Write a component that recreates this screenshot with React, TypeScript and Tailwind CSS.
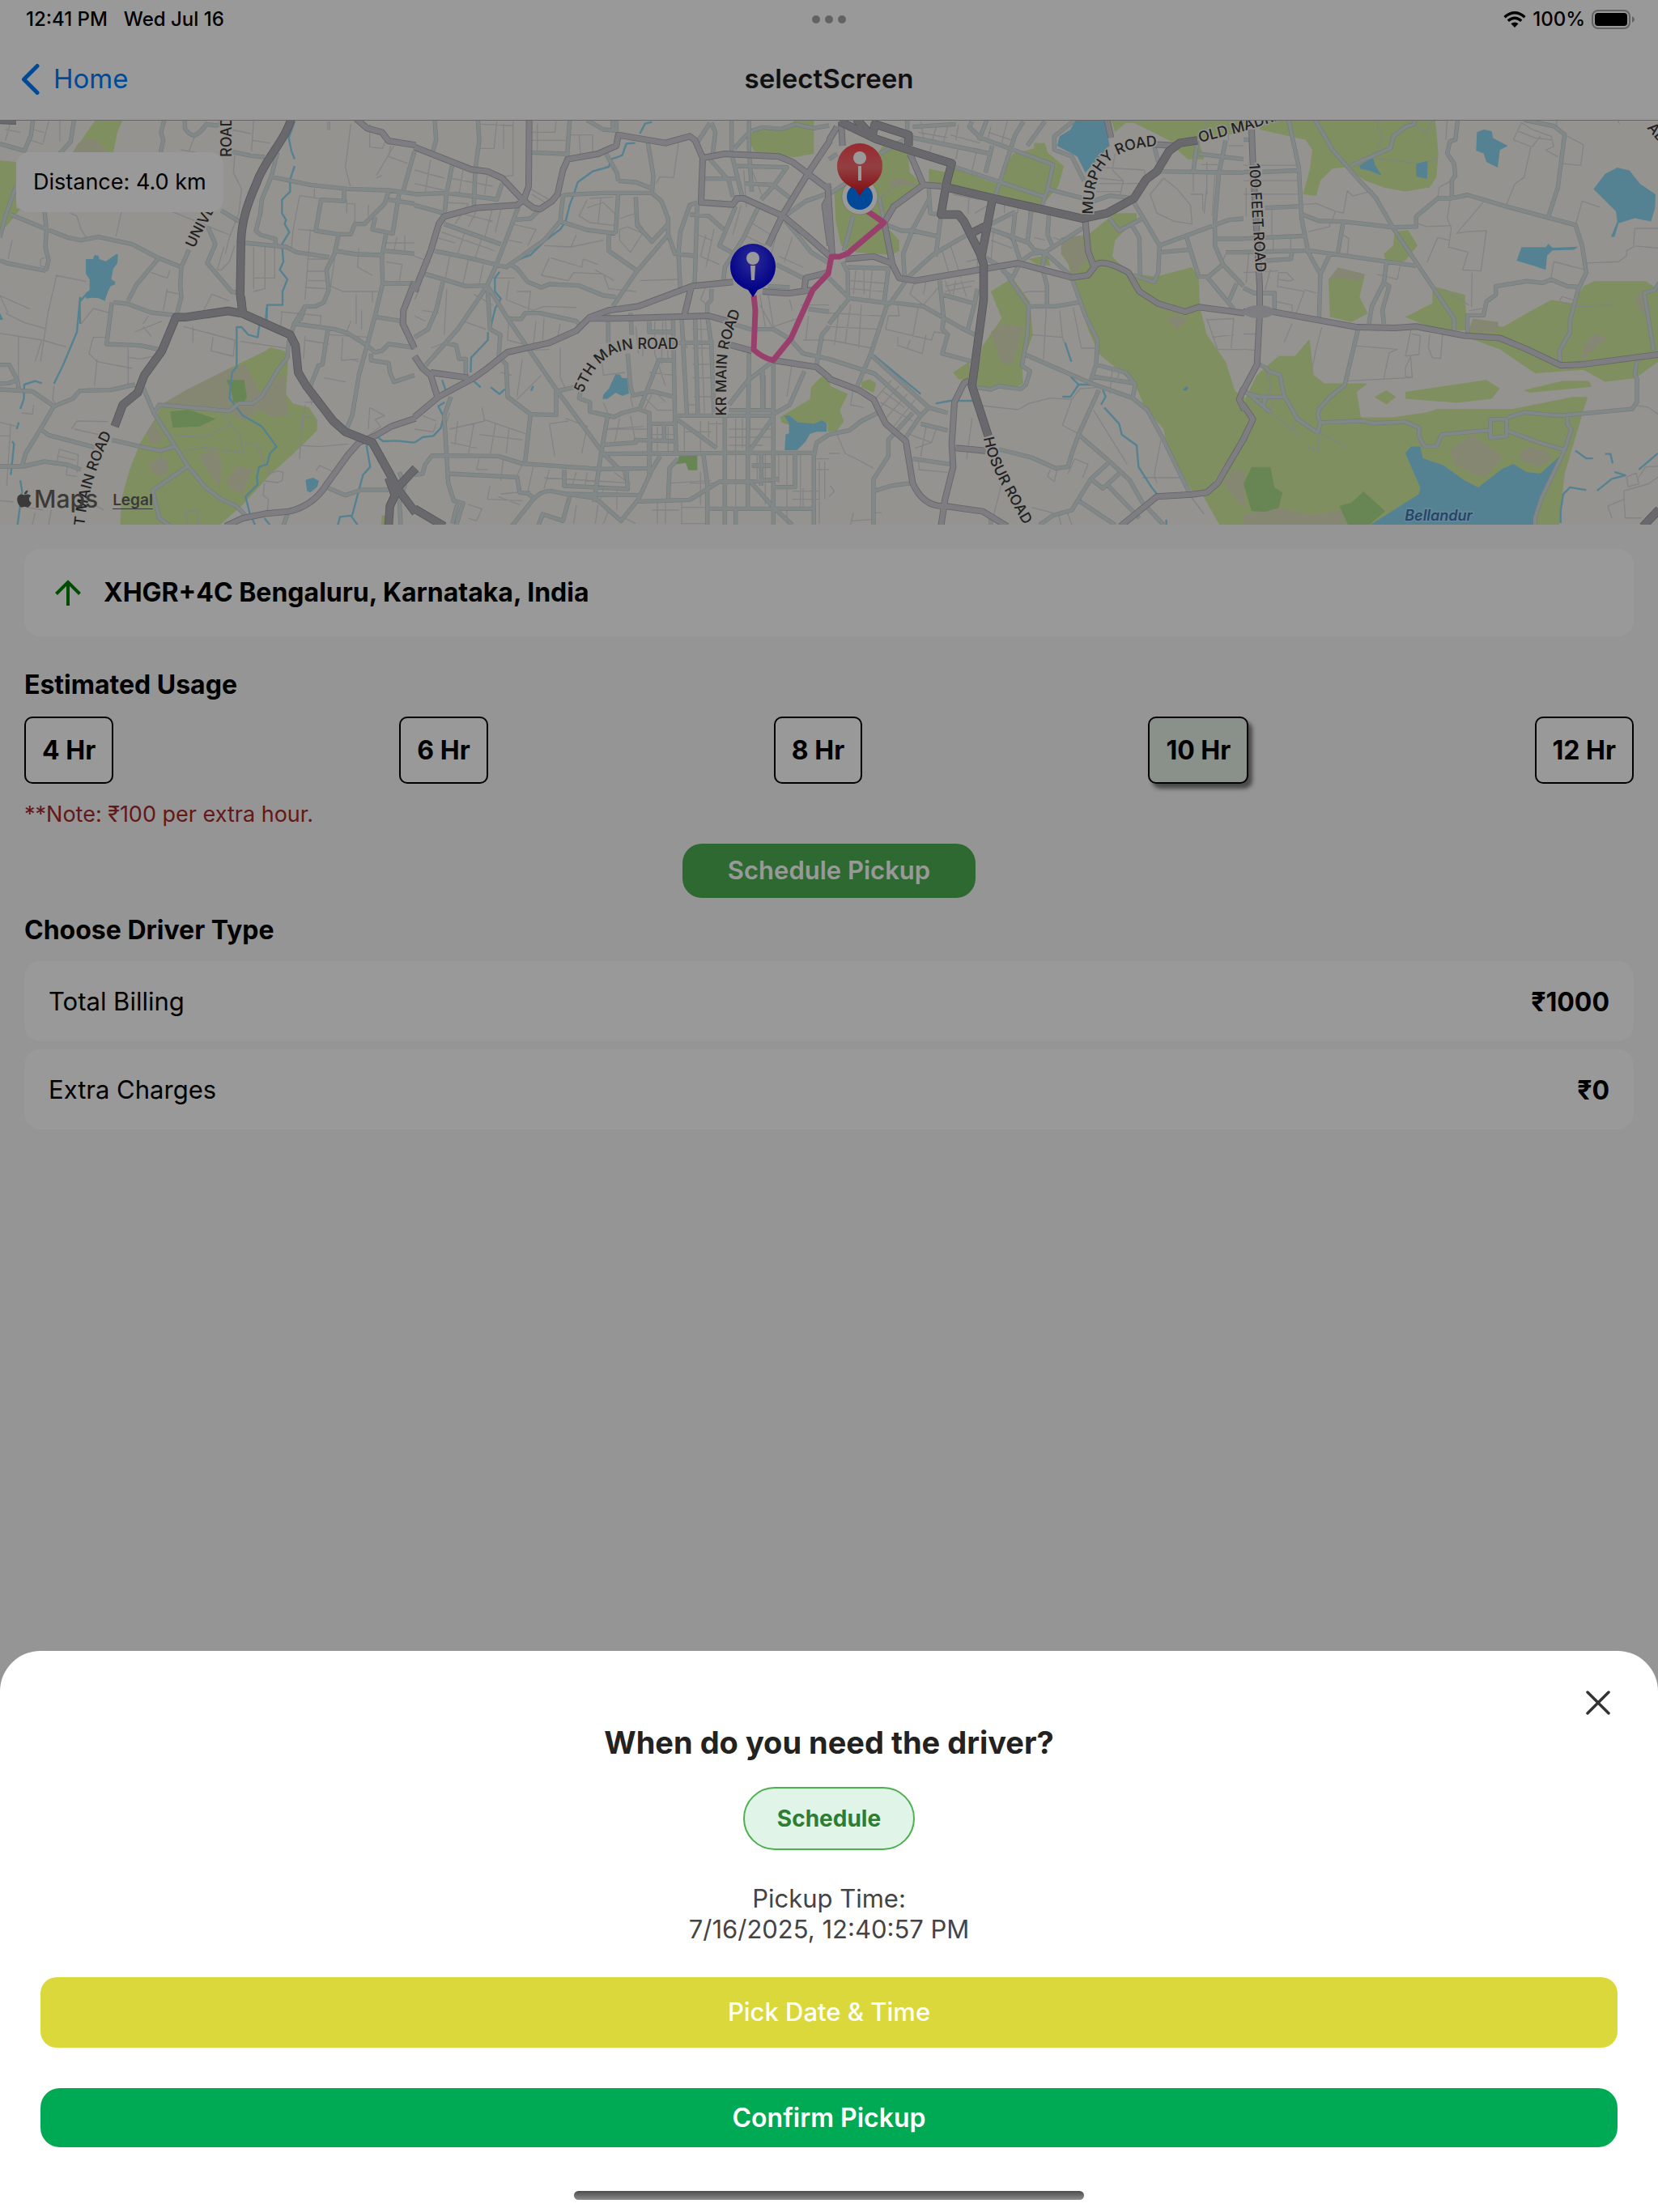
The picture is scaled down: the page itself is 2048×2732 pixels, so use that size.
import React, { useState } from "react";
import { FaApple } from "react-icons/fa";

type Tile = {
  transform: string;
  green: string;
  pale?: string;
  forest?: string;
  lake?: string;
  stream?: string;
  tiny: string;
  minor: string;
  medium: string;
  dark?: string;
};

/* The city map is described as five sheets, each in its own survey grid. */
const tiles: Tile[] = [
  {
    transform: "scale(0.33333)",
    green:
      "M355,444 H455 L435,490 L420,565 H270 L315,500Z M0,595 L60,600 V770 L75,775 L30,830 L0,860Z",
    pale: "M270,565 L290,530 L320,512 L360,520 L400,565Z",
    lake:
      "M318,960 L345,960 L350,945 L365,947 L368,960 L392,968 L430,942 H437 L435,975 L420,995 L412,1035 L428,1045 L425,1055 L410,1060 L400,1080 L388,1115 L365,1105 L340,1103 L318,1106 L318,1085 L332,1075 L332,1035 L318,1015Z M0,1160 L12,1185 H0Z",
    stream:
      "M1092,450 L1070,510 L1080,560 L1092,590 M1092,615 L1075,665 L1075,710 L1045,740 L1045,790 L1060,815 L1055,830 L1072,860 L1045,905 L1050,970 L1037,1000 L1065,1035 L1047,1080 V1130 H990 L988,1190 M320,1090 L295,1118 L297,1200",
    tiny:
      "M180,450 L160,530 M125,480 L165,492 M115,520 L160,535 M222,440 V525 M40,450 L20,520 M20,480 L75,490 M940,445 L932,560 M855,480 L930,495 M935,520 L1000,530 M1215,450 V480 H1222 V450 M1300,460 L1280,620 L1298,690 M1370,460 V545 L1418,550 L1430,520 M1448,540 L1440,580 L1510,605 M1415,650 L1395,660 M1460,540 L1395,650 M260,790 L285,800 L300,850 L320,880 M450,785 L430,875 M640,785 L800,850 L850,870 M870,575 L865,640 L895,700 L885,790 L850,880 L835,940 M670,555 L730,565 M720,510 L700,560 M1165,700 V730 M1180,735 L1110,725 L1085,860 L1080,920 M830,915 L805,1000 L820,1000 L850,970 L870,910 M940,915 V1070 M982,910 V1070 L940,1080 M1018,910 V1030 H940 M1150,850 L1130,1110 M1105,850 L1170,855 M1140,960 H1215 M1140,1005 H1210 M1140,1040 H1210 M1130,1065 L1215,1070 M1285,740 V790 M1285,755 H1315 V830 M1365,760 V800 M1330,920 L1325,990 L1380,1020 M1240,960 L1225,1060 L1270,1080 H1400 M1430,970 L1490,980 L1480,1040 M1470,880 L1460,930 M1500,870 V930 M1430,900 H1536 M1380,1080 V1120 M45,890 L30,960 M150,960 L165,955 M150,960 V985 L170,990 M210,1020 L180,1150 M205,1020 L320,1043 M0,1095 L110,1145",
    minor:
      "M0,533 L95,560 M123,440 L115,500 L90,560 M275,440 L262,525 L220,570 M610,440 L597,490 L605,520 L595,565 M685,440 V475 Q700,500 720,502 Q745,490 765,460 L800,465 L820,460 M0,880 L20,800 L60,690 M40,795 L170,848 L250,880 L300,890 L365,878 L490,905 L585,955 L672,990 M165,785 L172,850 L168,915 L180,965 L170,1003 M0,965 L25,975 L170,1003 M585,960 L505,1055 L475,1115 M700,925 L672,990 L668,1060 L672,1100 L655,1165 M770,840 L798,905 L768,975 L860,1082 L890,1085 M820,780 L885,820 M860,562 L930,577 L980,582 M1028,565 L1005,655 L970,740 L965,790 L948,855 L965,870 L1020,885 L1022,910 M1005,655 L1150,685 L1290,700 L1440,705 L1536,718 M1536,560 L1495,705 M1440,740 L1536,755 M910,900 L1060,915 L1100,935 L1220,953 M1245,930 L1320,942 L1415,945 M1430,930 L1536,940 M1440,710 L1425,755 L1380,800 L1350,830 L1315,830 L1300,868 L1255,868 L1240,940 L1210,1000 L1218,1075 L1200,1120 L1170,1135 L1130,1135 L1115,1180 L1090,1200 M1275,700 L1275,745 L1190,740 L1170,855 L1255,868 M1480,710 L1455,865 L1380,850 L1390,805 M1430,870 L1415,950 L1418,1050 L1390,1170 M1418,1050 L1536,1050",
    medium: "M1320,440 L1360,475 L1415,490 L1440,522 L1540,538",
    dark: "M1082,430 C1060,520 980,590 950,680 C915,760 895,820 893,900 L890,1090 L900,1165 M0,444 L60,446",
  },
  {
    transform: "translate(0 300) scale(0.33333)",
    green:
      "M445,1050 L450,950 L480,840 L520,740 L575,650 L600,600 L690,545 L850,465 L985,400 L1000,387 L1055,400 L1068,430 L1060,560 L1085,595 L1145,610 L1175,655 V695 L1110,760 L1000,860 L900,970 L810,1050Z M1415,1010 H1440 V1050 H1412Z",
    pale:
      "M595,600 L690,545 L850,465 L910,450 L940,510 L970,560 L1055,480 L1060,560 L1070,640 L1010,645 L960,620 L910,660 L830,625 L620,612Z M545,700 L570,660 L600,720 L590,745 L555,740Z M550,820 L590,795 L625,805 L615,860 L580,865Z M735,790 L790,760 L820,800 L815,910 L780,860Z M840,880 L880,825 L935,840 L900,930 L850,910Z",
    forest:
      "M838,508 L905,508 L915,570 L905,590 L865,590 L855,540Z M630,625 L700,618 L800,652 L740,680 L640,685Z",
    lake: "M1132,878 L1160,870 L1182,882 L1175,905 L1150,925 L1138,920Z",
    stream:
      "M297,200 L285,330 L235,450 L200,522 M155,520 L130,512 L90,525 L88,580 L75,615 M70,665 L62,690 M45,735 L52,745 L40,860 M75,880 L82,920 L65,1045 M988,240 L985,285 L960,310 L955,350 L920,340 L895,312 L877,312 V460 L860,480 L850,575 L900,640 L970,680 L1025,755 L1000,780 L990,820 L960,830 L952,870 L955,895 L910,940 L925,1000 L945,1045 M980,1020 L1000,1045 M1400,720 L1420,735 L1470,733 L1536,740 M1358,750 L1372,830 L1345,860 L1305,1010 L1260,1015 L1252,1045 M1300,1010 L1325,1045",
    tiny:
      "M180,245 L150,440 M20,260 L90,295 L170,318 M0,195 L30,260 M0,335 L155,360 L245,385 M68,345 V510 M155,360 L130,440 M345,245 L300,300 M345,243 L408,260 M390,350 H345 L330,410 L360,440 L490,465 M360,430 L350,530 M475,390 V530 M475,425 L520,430 L570,420 M560,110 L620,130 L630,100 M500,330 L600,290 M530,310 L560,345 M530,300 L550,270 M620,170 L605,250 M620,180 L665,190 M680,310 L870,360 M715,310 V370 M785,190 L850,215 M785,190 L755,250 M790,350 L782,400 L865,420 L870,360 M1040,255 L1190,270 L1185,320 M1045,255 L1040,310 M890,365 L1060,390 M1270,350 L1265,435 L1330,430 M1130,360 L1220,375 M1130,345 L1125,430 M285,660 L400,662 M275,690 L410,720 M285,660 L265,690 M220,765 L210,815 L270,830 M220,765 L290,785 L285,850 M215,790 L280,805 M250,830 L245,860 L285,865 M40,670 L25,900 M0,665 L60,680 M0,715 H40 M80,630 L120,635 L125,600 M200,530 L195,580 L210,600 M600,710 L760,720 L850,672 L885,700 L905,780 L760,757 L680,770 M830,630 L860,680 M905,740 L950,745 L975,800 L1000,855 L1030,845 L1050,850 L1045,880 L1030,888 L980,882 M600,770 L590,870 M600,820 L640,870 M1110,800 L1120,640 L1165,650 M1130,600 L1120,690 M1130,590 H1165 M1110,750 L1180,755 L1290,745 M1370,610 L1425,640 L1390,655 L1410,680 L1365,715 M1370,610 L1365,690 M1170,845 L1185,825 L1240,850 M680,1000 L730,990 L735,1040 M685,1000 L695,1045 M980,890 L975,935 L995,950 L990,1000 M0,955 L50,960 M100,980 L160,990 M130,1000 L120,1045 M190,990 L180,1045 M350,970 L385,990 M1220,340 L1370,350 M1300,290 L1280,340 M1320,190 V300 M1340,250 V320 M1300,430 L1330,440 M1200,500 L1280,515 M1150,560 L1155,600",
    minor:
      "M420,220 L470,225 L560,258 L655,268 M415,220 L395,375 L520,380 L590,395 M0,452 L35,452 L65,510 L70,545 M0,522 L30,520 L60,510 M0,543 L120,550 L200,605 L270,577 L295,548 L410,545 L500,525 M200,605 L150,690 L95,780 L82,828 M0,828 L85,828 L165,810 L250,822 L300,840 M150,690 L180,712 L350,757 M415,730 L530,757 L595,770 L645,755 M530,535 L570,630 L695,825 L760,905 L820,950 L875,975 L910,1010 M575,625 L590,600 L850,623 L885,595 L935,595 L970,570 L1030,470 L1065,425 L1070,370 L1090,300 L1130,237 M695,828 L565,918 L590,1020 L630,1048 M1095,300 L1240,320 L1290,335 L1360,380 L1390,405 L1415,400 L1440,375 L1536,388 M1215,320 L1195,450 L1180,455 L1150,530 M1390,270 L1360,380 L1330,490 L1305,640 L1280,700 M1375,410 L1375,435 L1440,445 L1445,480 L1460,515 L1536,490 M1395,275 L1490,290 M1210,905 L1280,935 L1340,915 L1440,915 M1480,850 L1500,900 L1480,950 L1485,1045 M1065,1005 L1050,1048",
    medium:
      "M1540,650 L1450,680 L1390,715 L1330,740 L1290,785 L1210,895 Q1160,975 1070,995 L985,1003 L900,1020 L835,1050 M1536,145 L1495,250 L1493,300 L1536,390",
    dark:
      "M893,200 L900,265 M900,262 L845,252 L690,275 L652,275 L600,400 L535,490 L510,555 L455,600 L425,680 M900,262 L1075,340 L1095,380 L1105,480 L1135,530 L1235,660 L1280,700 L1380,740 L1430,830 L1480,920 L1540,1000 M1540,835 L1480,900 L1445,975 L1440,1050 M1440,870 L1465,940",
  },
  {
    transform: "translate(512 130) scale(0.33333)",
    green:
      "M1250,100 L1290,90 L1360,90 L1400,70 H1480 V180 L1405,193 L1350,185 L1290,175 L1260,172 L1242,140Z M1410,50 H1480 V75 L1400,70Z M1540,1005 L1505,1008 L1470,1045 L1465,1090 L1355,1155 L1360,1175 L1390,1185 H1510 L1540,1170Z",
    forest: "M980,1300 L1048,1298 V1352 L1015,1352 L1005,1325 L970,1330Z",
    lake:
      "M745,997 L762,998 L768,1010 L788,1012 L795,1068 L770,1077 L745,1065 L715,1088 H697 L700,1072 L720,1050Z M1370,1150 L1390,1150 L1420,1175 L1480,1180 L1510,1168 L1528,1178 L1527,1210 L1490,1210 L1465,1218 L1450,1245 L1418,1278 H1372 L1375,1220 L1388,1215 V1180Z",
    stream:
      "M880,62 L855,68 L835,105 M818,140 L785,142 L770,185 L730,200 L720,228 L660,245 L605,285 L592,325 L575,370 L560,430 L540,460 L480,505 L430,555 L355,583 M315,617 L298,640 V690 L320,717 L300,750 L290,790 L282,825 M272,840 V870 L210,935 L208,990 M215,1018 L245,1045 M282,1045 L315,1070 L335,1052 M102,1018 L115,1055 M112,1100 L88,1115 L108,1155 L98,1195 L70,1225 L30,1230 L0,1250 M440,1040 L432,1058",
    tiny:
      "M305,60 L295,160 H245 M365,60 V260 L320,265 M245,70 L365,75 M330,70 V160 M435,100 H520 L525,60 M435,130 H560 M455,70 V170 M575,110 H660 V170 M610,110 L615,180 M0,240 L110,270 M60,200 L40,320 M0,290 L110,315 M180,240 L165,330 M130,270 L290,300 M270,260 L260,330 M430,310 L500,350 M435,330 L500,370 M110,360 L200,365 M240,370 L200,450 M200,365 L150,440 M290,380 L260,490 M320,385 L300,470 M170,400 L290,430 M100,470 L300,540 M190,460 L160,550 M250,490 L220,580 M80,490 L150,510 M360,440 L450,460 L420,520 M350,500 L400,510 M60,580 L0,560 M130,560 L115,640 M200,570 L180,660 M255,590 L240,660 M640,350 L610,410 L650,435 L740,445 M640,380 L700,360 L740,400 M650,345 L735,340 M690,345 L680,440 M760,420 L820,400 M760,460 L790,450 L845,475 L800,545 L760,500Z M820,420 L850,460 M895,290 L910,265 L960,268 L980,130 M580,525 L700,500 M500,565 L470,630 L570,650 L590,620 L700,625 L720,680 L820,690 M505,565 L620,600 L625,570 L680,590 M670,610 L740,650 M480,520 L580,525 L600,480 M835,650 L980,645 M350,650 L340,720 L440,760 L480,745 L600,750 M380,690 L430,690 L420,770 M290,640 L370,640 M220,700 L290,740 M120,680 L110,850 M20,680 L0,720 M30,760 L90,770 M180,800 L265,830 M60,900 L110,880 M0,780 L40,800 M350,780 L345,870 L420,890 M450,800 L440,890 M480,790 L475,870 M540,810 L530,860 M345,910 L500,905 M540,900 V1010 L560,1050 M400,940 L380,1080 M470,1000 L380,1090 M320,990 L360,1000 M690,920 L700,1000 L780,990 M820,820 L830,920 M850,860 L845,930 M890,800 V920 L930,1040 M920,800 L915,960 M930,800 L940,940 M870,990 L960,1000 M1060,790 L1075,1140 M1030,830 H1090 M1030,900 H1090 M1030,960 H1100 M1030,1010 H1110 M1035,1080 H1110 M1000,1110 H1040 M990,820 L1010,900 M1080,480 L1060,560 M1050,480 L1100,500 M1060,560 L1130,590 M1080,670 L1060,720 L1085,740 M1110,460 L1080,600 M1220,240 L1230,380 M1250,240 L1290,340 M1210,370 L1180,480 M1270,380 L1360,420 M1240,430 L1320,480 M1220,480 L1300,520 M1350,440 L1320,560 M1400,490 L1370,580 M1350,560 L1440,600 M1280,700 L1300,820 M1310,700 L1330,820 L1420,790 M1390,720 L1400,760 M1280,740 L1330,830 M1460,780 L1450,870 M1430,740 L1536,740 M1440,870 L1536,870 M1400,950 L1380,1080 M1280,1000 L1290,1100 M1300,1000 V1130 M1120,1170 V1270 M1190,1160 V1500 M1215,1160 V1270 M1165,1200 H1330 M1165,1230 H1330 M1165,1260 H1290 M1090,1180 H1150 M1000,1180 V1280 M1060,1170 V1280 M1090,1170 V1230 M1000,1210 H1100 M1270,1290 V1400 M1300,1290 V1480 M1380,1290 V1550 M1350,1290 V1400 M1430,1290 V1490 M1400,1430 H1500 M1400,1460 H1500 M1440,1420 V1500 M1490,1310 H1536 M1490,1350 H1536 M1500,1320 V1550 M1520,1320 V1460 M1010,1290 V1300 M1060,1360 V1480 M1020,1400 H1120 M950,1400 L1100,1390 M990,1470 V1550 H1080 V1490 M990,1490 H1080 M900,1470 V1550 M930,1470 V1550 M880,1500 H980 M700,1200 L850,1190 M800,1150 L820,1250 M760,1160 L740,1260 M720,1200 H860 M880,1190 V1280 M900,1190 V1280 M940,1190 V1290 M875,1220 H970 M570,1170 L500,1180 L520,1300 M560,1160 L640,1190 L620,1290 M240,1310 L230,1350 H270 M330,1300 L320,1390 M400,1330 L380,1370 M440,1340 L420,1430 M320,1440 L430,1430 M310,1450 L390,1480 M200,1480 L250,1495 L230,1540 L200,1530 M280,1410 L270,1460 L400,1465 M500,1350 L480,1420 M600,1360 L580,1420 M640,1360 L630,1420 M480,1380 L800,1400 M740,1360 L780,1390 L770,1350 M700,1420 L690,1460 M750,1420 V1500 M600,1480 L590,1550 M680,1480 L670,1550 M720,1500 L700,1550 M780,1530 L820,1550 M130,1140 L110,1200 M130,1200 L260,1170 L250,1120 M160,1170 L150,1260 M220,1180 L200,1290 M260,1165 L420,1220 M240,1220 L400,1240 M300,1180 L280,1300 M350,1200 L340,1290 M135,1250 L230,1270 M0,1200 L70,1210 L80,1180 M30,1150 L80,1170 M700,1100 L720,1150 M800,1080 L810,1120 M860,1090 L900,1130 L970,1130 M900,1070 L930,1100 M880,1070 L850,1130",
    minor:
      "M75,55 L80,130 L65,180 M235,55 L240,130 L225,240 L220,370 M0,330 L120,325 L280,345 L305,350 L325,290 M140,220 L118,330 L112,400 M0,370 L110,400 M110,440 L320,515 M385,375 L350,470 L300,600 L270,665 M365,425 L430,420 L465,385 M75,540 L200,565 L340,600 L480,500 L540,430 L550,340 M40,625 L190,670 L270,668 L345,790 L530,1060 L700,1290 L760,1350 M355,590 L380,605 L420,655 L470,675 L500,663 L610,668 L700,705 L745,710 M270,668 L160,830 L40,965 M270,668 L280,830 L318,850 L312,930 L340,960 L345,1080 L430,1145 L525,1148 V1060 L590,1045 M345,790 L395,792 L410,770 L465,770 L600,800 L620,820 M105,655 L80,760 L50,830 L0,860 M110,880 L155,890 L165,940 L190,940 V1010 M435,175 L562,180 M575,55 L565,200 M540,340 L560,332 L700,325 L880,325 L885,260 L865,140 M710,180 L750,250 L755,280 M755,325 L745,475 M755,280 L820,285 L880,308 M880,325 L915,355 L940,420 V480 L820,620 L735,745 M820,340 L825,445 L880,505 L940,440 M540,430 L640,462 L745,475 M720,475 V540 L820,610 M940,480 L965,550 L1040,558 M1048,360 L1038,670 M1048,360 L1020,370 L985,470 L978,550 L985,680 M1020,405 L1090,410 L1145,460 M1190,375 L1130,520 L1175,545 M1275,375 L1220,490 L1150,600 L1145,650 M640,55 L700,90 L755,95 M748,55 V95 M735,55 V90 M1095,65 L1050,135 M1100,65 L1115,100 L1105,180 M1175,55 V180 L1215,340 M1240,55 V170 L1250,320 M1240,100 L1185,160 M1250,95 L1290,82 L1360,88 L1410,70 L1480,85 L1536,75 M1095,200 L1165,280 L1180,340 M1075,272 H1190 M1190,225 L1380,230 L1330,300 L1285,350 M1225,290 L1330,295 L1400,350 M1380,405 L1450,355 L1536,325 M1375,430 L1410,470 L1470,545 L1536,585 M1340,590 L1440,640 M1310,670 L1390,675 M1536,765 L1460,755 M1100,680 V720 L1085,740 V780 L1100,885 L1110,1150 M718,770 V880 M800,770 L805,850 M870,800 V840 H960 M958,790 L965,1150 L970,1290 M990,790 L1010,1150 M1040,790 L1050,1150 M980,880 H1110 M790,920 L800,1040 L810,1075 L880,1060 L960,1080 M965,945 L905,945 L835,1125 M615,1060 L610,1085 L650,1100 V1135 L740,1155 L770,1140 L830,1125 L870,1140 V1380 M715,1155 L690,1300 L665,1470 M870,1180 H970 M925,1180 V1240 M975,1150 H1330 M975,1165 L1120,1270 M1165,1130 H1330 M1150,1150 V1560 M1240,920 L1235,1270 V1500 M1330,950 V1560 M1325,950 L1300,970 L1235,1020 L1165,1110 M1290,980 V1130 M1330,1155 L1245,1275 M1330,1145 L1390,1110 L1445,985 M690,1292 L1150,1288 H1480 V1560 M1536,1220 L1490,1250 L1480,1300 M0,1370 L30,1365 L40,1330 L65,1298 L310,1300 L400,1328 L690,1348 L880,1345 M135,1080 L110,1150 L125,1400 L145,1465 L180,1475 L155,1555 M158,1480 L140,1550 M125,1365 L380,1378 L390,1435 L420,1438 L440,1455 M360,1560 L440,1460 Q480,1420 520,1432 L560,1440 L670,1455 L765,1540 L830,1460 L880,1350 L910,1300 M700,1258 L820,1250 V1240 L970,1245 M555,1350 V1410 L790,1422 L785,1350 M560,1440 L840,1445 M575,1450 L550,1540 L475,1515 L460,1555 M830,1468 L1020,1462 L1130,1395 H1240 L1350,1385 M1090,1495 H1480 M1245,1395 L1330,1490 L1400,1555 M430,1145 L410,1320 M940,1460 L945,1345 L975,1310 M1070,1290 L1085,1400 V1555 M1250,1335 H1320 M1385,860 L1440,920 L1536,940 M1490,960 L1510,850 L1536,820 M1180,810 L1245,830 H1330 L1390,865 M1285,1288 V1410 M1410,1288 V1415 H1330 M1190,1495 V1555",
    medium:
      "M0,155 L210,238 L270,245 L325,270 L400,350 L440,380 L465,385 L510,355 L530,330 L550,240 L568,200 L680,180 L748,150 L755,110 L930,140 L1020,115 L1040,130 L1068,195 M425,55 L423,300 L405,350 L380,370 L230,380 L110,412 L90,440 L60,540 L0,690 M1068,195 L1062,360 L1180,368 L1195,345 H1220 L1365,410 L1450,480 L1540,560 M1068,195 L1150,180 L1350,190 L1400,210 L1460,255 L1540,315 M1540,130 L1460,250 L1365,405 L1310,520 M1536,340 L1520,370 L1530,450 L1540,520 M0,1155 L90,1080 L220,1010 L270,975 L345,915 L500,880 L600,835 L650,785 L720,760 L830,745 L1030,670 L1180,655 M650,790 H760 L1090,780 L1160,800 M1025,675 L1000,780 M1290,690 L1385,697 L1470,685 M1445,680 L1450,640 L1540,618 M1160,885 L1250,910 M1330,945 L1490,970 L1540,1012 M0,930 L30,975 L60,1000 L85,1080 M60,990 L200,1010",
    dark: "M0,1495 L110,1560",
  },
  {
    transform: "translate(1024 130) scale(0.33333)",
    green:
      "M165,200 L200,150 L290,165 L300,250 L345,290 L245,380 L205,440 L260,500 V540 L230,555 L100,545 L45,520 L25,430 L20,320 L60,280Z M450,230 L620,290 L680,180 L760,160 V140 H800 L810,175 L870,225 L850,300 L790,370 L620,340 L530,315 L445,295Z M370,235 L440,250 L430,300 L370,285Z M860,490 L960,480 L1060,400 H1140 V420 L1060,500 L1050,560 L1110,620 L1210,635 L1345,600 L1370,640 L1375,750 L1400,850 L1470,950 L1505,1060 L1540,1080 V1220 L1400,1435 L1345,1430 L1250,1260 L1240,1200 L1170,1120 L1135,1035 L1000,920 L960,830 L900,640Z M600,690 L680,640 L745,730 L755,850 L715,960 L720,1030 L680,1055 L540,1040 L570,890 L640,790Z M460,990 L520,950 L525,1020 L480,1015Z M1045,50 H1540 V100 L1370,125 L1300,150 L1200,100 L1130,65 H1100 L1060,100Z M1285,160 L1370,130 L1390,200 L1330,200Z M740,570 L810,555 L820,595 L770,590Z M1385,1445 L1440,1400 L1540,1250 V1560 H1450Z M120,1025 L150,1015 L175,1030 L165,1065 L120,1045Z M-5,1035 L70,1070 L40,1130 L55,1170 L30,1205 L-5,1210Z",
    pale:
      "M860,490 L930,485 L960,570 L910,625 L860,550Z M600,840 L640,810 L720,820 L680,960 L640,960Z M220,280 L260,270 L320,290 L230,300Z M1250,790 L1290,778 L1330,795 L1290,830Z M1460,1400 L1500,1345 L1540,1360 V1500Z",
    lake:
      "M915,50 H1020 L1040,150 L950,250 L920,190 L845,150 L855,115 L895,90Z M1310,1055 L1325,1040 L1332,1048 L1325,1058Z",
    stream:
      "M165,925 L340,1070 M395,1105 L450,1095 L540,1095 M875,880 L898,950 M895,1005 L925,1035 H975 M925,1035 L895,1080 H865 M1015,1055 L1025,1080 L1008,1110 M1020,1120 L1075,1180 L1085,1220 L1140,1260 L1147,1340 L1195,1415 L1215,1440 M1250,1535 V1555",
    tiny:
      "M340,60 L350,120 M400,70 L380,140 M440,80 L420,150 M330,100 L440,120 M450,110 L560,140 M480,70 L470,130 M600,80 L590,120 M590,100 L680,130 M660,60 L640,140 M620,140 L680,160 M380,150 L370,180 M480,150 L470,200 M550,160 L530,240 M260,290 L180,350 M250,290 L320,295 M430,330 L420,400 M460,330 L560,350 M520,330 L515,400 M540,400 L590,370 M650,350 V400 M700,360 V400 M740,380 V440 M600,500 L680,530 M610,460 L600,580 M640,470 L700,520 M760,490 L800,500 M830,490 L860,500 M450,520 L490,640 M420,540 L450,640 M510,580 L550,570 V610 M430,650 L450,700 M470,650 L460,700 M490,650 L510,710 M430,670 L540,650 M430,690 L530,670 M320,650 L300,700 L350,740 L410,670 M360,650 L350,700 M100,610 L90,700 M130,610 V700 M160,610 L150,720 M80,650 L210,660 M80,680 L200,690 M40,740 L20,890 M80,740 L60,880 M120,740 L110,900 M0,770 L190,780 M0,820 L180,830 M0,870 L160,900 M220,780 L210,830 L380,870 L390,840 L430,845 M220,780 H260 L255,740 M330,750 L310,860 M255,860 V890 L345,920 L360,850 M300,870 L290,900 M700,700 L740,690 L800,690 M750,850 L865,860 L855,760 M805,755 L795,940 M865,860 L900,950 M905,750 L935,900 L985,900 M540,1110 L700,1128 L740,1105 L820,1085 L900,1090 L865,1185 L920,1215 M900,1090 L930,1050 L1000,1045 M980,1130 L1105,1330 M530,1160 L510,1310 M1050,980 L1040,1070 M1080,960 L1070,1010 M1230,1240 L1205,1370 L1215,1400 M1160,1380 H1305 M1330,1435 L1390,1515 M820,1350 L810,1375 L835,1395 L845,1350 M885,1365 L910,1310 M910,1310 L960,1330 L940,1380 M640,1400 L610,1520 M750,1490 L830,1510 M850,1510 L860,1555 M880,1500 L900,1555 M1240,270 L1290,310 L1340,370 L1345,440 L1280,430 L1215,400 L1190,330 L1240,270 M1340,330 H1385 V390 M1400,300 L1390,400 M1350,250 V320 M1400,210 V330 M1430,260 L1420,410 M1380,220 H1440 M1060,180 L1050,240 L1090,280 L1080,330 M1000,230 L1170,240 M1000,270 L1090,280 M1000,290 H1150 M990,320 H1080 M1170,240 V280 M1400,790 L1440,905 H1536 M1405,795 L1500,790 L1490,900 M1420,860 L1500,850 M1470,550 L1450,600 M1480,60 V130 M1400,60 L1390,110 M1480,150 H1536 M30,1220 L60,1290 L120,1320 L165,1345 M0,1290 H40 M0,1450 L20,1430 L5,1410 M80,1540 L160,1535 M90,1510 L80,1555 M170,1510 H195 M230,1020 L170,1090 M260,1040 L190,1120 M290,1070 L210,1160 M320,1090 L240,1190 M200,1060 L280,1120 M190,1100 L310,1170 M90,1050 L80,1110 L130,1120 M360,1190 L340,1300 M400,1190 L380,1250 L320,1270 M300,1220 L380,1250 M330,1350 L440,1360 M330,1310 L335,1350",
    minor:
      "M290,55 V120 L190,180 M310,120 L600,180 M310,80 L470,70 M455,225 L800,340 M720,60 L690,110 L615,340 M530,60 L520,80 L560,120 L830,220 L810,310 L790,370 M910,55 L835,115 V165 L900,190 L945,280 M810,310 L980,355 L1040,335 L1130,345 M585,55 L555,130 M800,60 L735,150 M605,150 L580,250 M370,310 L375,400 L415,405 M370,350 L310,460 L275,550 L280,640 M205,440 L270,465 H310 L400,485 M415,410 L395,560 M520,475 L390,550 L290,640 M600,460 L685,490 L740,510 L760,535 L800,545 L940,455 M690,395 L680,490 L710,580 M690,395 L600,440 M750,390 L735,505 M815,400 L810,480 L830,525 M800,545 L900,635 M800,545 L790,600 L808,670 V750 M570,560 L640,600 L740,745 H840 L925,730 M640,610 L680,640 L710,580 L750,550 L800,545 M740,745 L735,850 L715,965 L745,985 L730,1035 L710,1052 L630,1040 L600,1053 L540,1045 M900,640 L950,780 L995,870 L990,960 L970,1020 M730,925 L970,1030 L1125,1085 L1180,1130 L1240,1240 L1335,1435 M985,960 L1100,990 L1135,1035 L1125,1085 M975,1005 L1130,1030 M1000,1055 L925,1220 L900,1290 L885,1340 L840,1345 L750,1305 L630,1275 M925,1220 L1040,1320 L1115,1390 L1160,1470 L1240,1555 M780,1555 L830,1520 L900,1500 L970,1385 L1035,1325 M925,1465 L1060,1555 M970,1385 L1015,1420 L1075,1365 M1030,1405 L1150,1530 M1040,420 L1075,465 L1160,420 M1130,360 L1160,410 L1225,520 L1220,620 L1205,655 L1130,630 M1120,440 L1150,490 L1153,630 M1225,520 L1480,425 L1536,420 M1225,545 L1340,535 M1325,490 L1370,635 H1400 L1500,755 M1430,420 V520 L1460,590 L1400,640 M1460,590 L1536,670 M1510,660 L1480,730 M1430,495 H1536 M1470,545 H1536 M1215,245 L1536,250 M1370,180 L1536,200 M1365,130 L1350,245 M1470,130 L1445,250 L1430,430 M1205,150 L1220,210 M50,580 L70,620 V710 M70,600 L220,605 L205,725 M0,640 L75,715 L230,735 M285,650 L230,730 L350,745 L490,825 L540,850 M75,715 L0,810 M215,740 L155,920 L105,1040 M410,650 L425,790 L420,830 L440,850 L420,920 L525,948 M415,700 L540,735 L550,680 M540,735 L515,830 M0,940 L170,995 L340,1150 L285,1230 M155,925 L370,1120 L440,1140 M340,1180 L440,1205 M370,1120 L340,1150 M310,1140 L220,1240 V1300 L165,1385 V1555 M165,1430 L230,1410 L305,1400 M310,1310 L450,1330 M0,1220 L75,1205 L120,1170 L180,1140 M90,410 L55,540 M185,340 L205,430 M0,330 L60,290 M0,200 L30,180 M600,1530 V1555",
    medium:
      "M300,180 L350,295 L415,300 M350,295 L240,375 L205,435 L235,590 L260,640 L320,650 L700,585 L900,638 L960,630 L990,590 Q1020,570 1110,620 L1150,690 L1220,735 L1320,765 L1370,748 L1540,770 M60,570 L165,560 L230,585 M950,430 L960,540 L980,595 M-4,1012 L110,1055 L165,1090 L210,1180 L285,1245 L310,1400 Q350,1490 430,1485 L570,1505 L660,1560 M520,1020 L500,1030 L465,1100 L455,1250 L460,1340 L430,1460 L415,1560 M470,1270 L580,1280 M1080,1560 L1215,1450 L1345,1442 L1400,1435 L1440,1400 L1540,1230 M1030,50 L1045,120 M1200,145 L1290,150 M45,60 L50,150 M0,130 L30,80 M-5,290 L12,560 M1536,1050 L1520,1090 L1540,1130",
    dark:
      "M40,60 L175,125 L295,165 L455,215 L435,290 L415,405 H480 L500,430 L560,550 L573,590 V720 L530,1040 L590,1225 M440,305 L610,345 L940,420 L1030,400 L1130,345 L1175,275 L1215,245 L1260,170 L1300,140 L1365,130 M605,350 L565,560 M525,475 L585,445 M100,50 L160,115 L170,70 L295,110 V150",
  },
  {
    transform: "translate(1536 0) scale(0.33333 0.42090)",
    green:
      "M70,345 H710 L722,450 L715,520 L690,550 L600,562 L520,550 L450,530 L380,490 L330,495 L285,530 L270,575 L220,570 L245,500 L255,440 L230,410 L200,405 L60,380Z M560,680 L610,675 L645,720 L600,765 L530,780 L520,745 L555,720Z M315,820 L350,785 L450,805 L430,870 L460,920 L400,945 L320,930Z M700,840 L820,865 L830,970 L720,970 L600,930 L700,890Z M830,990 L850,935 L960,960 L1060,915 L1140,880 L1220,890 L1260,840 L1300,825 H1490 L1540,850 V1060 L1450,1110 L1340,1120 L1260,1085 L1080,1095 L950,1025Z M600,1150 L900,1115 L950,1140 L920,1170 L790,1182 L600,1170Z M485,1165 L530,1145 L565,1165 L530,1187Z M1040,1145 L1180,1118 H1280 L1290,1135 L1060,1152Z M0,1180 L50,1100 L130,1045 H190 L245,995 L260,1100 L300,1125 H460 L420,1150 L435,1225 H550 L680,1210 L720,1200 H1000 L1220,1165 H1275 L1190,1390 L1170,1545 H0Z M-5,350 L20,352 L-5,370Z",
    pale:
      "M315,820 L350,785 L450,805 L430,825 L350,815Z M835,970 L850,935 L945,945 L940,975Z M1250,1060 L1270,1000 L1300,980 L1350,990Z M765,1320 L850,1275 L960,1340 L920,1380 L900,1400 L850,1390 L780,1360Z M1020,1330 L1060,1310 L1130,1325 L1140,1350 L1090,1370 L1030,1350Z M0,1510 L130,1490 L250,1510 L380,1495 V1545 H0Z M1450,870 L1485,850 L1510,910 L1490,930 L1460,900Z",
    forest:
      "M0,1420 L30,1370 H100 L115,1430 L145,1445 L130,1490 L80,1502 L30,1500Z M355,1485 L400,1475 L445,1442 L525,1500 L460,1545 H390Z",
    lake:
      "M600,1330 L620,1310 H655 L665,1345 L740,1365 L820,1410 L870,1430 L960,1375 L1000,1362 L1050,1385 L1100,1390 L1190,1325 L1105,1460 L1080,1545 H460 L650,1450 L655,1430Z M865,388 L890,380 L920,385 L925,405 L980,428 L950,440 L942,492 L900,475 L890,450 L862,442Z M1297,555 L1340,510 L1385,492 L1430,500 L1470,540 L1527,570 L1525,610 L1510,650 L1450,640 L1390,655 L1375,695 H1362 L1385,650 L1380,620Z M1012,765 L1030,725 H1120 L1130,715 L1145,727 L1240,724 L1225,733 L1145,735 L1125,750 L1120,792 L1075,780Z M430,485 L480,462 L488,485 L512,515 L470,502 L432,495Z M640,480 L683,472 L680,525 L640,518Z",
    stream:
      "M1230,1322 L1270,1345 H1295 M1340,1332 H1360 L1368,1360 M1375,1385 L1415,1395 L1365,1405 L1310,1440 M1175,1535 V1500 L1185,1450 L1210,1430 L1270,1438 M1465,1378 L1536,1330",
    tiny:
      "M500,352 L495,380 L515,395 L500,440 M490,465 L650,480 L720,465 M630,365 L680,390 L700,352 M750,410 L755,352 M1000,410 L1030,360 L1070,380 L1140,400 L1150,430 L1120,440 L1165,460 M1000,410 L1065,430 L1040,520 L1005,540 L975,600 M1020,385 L1080,405 L1140,410 M1070,430 L1100,400 M1190,395 L1260,425 L1250,485 L1180,480 M1385,352 L1395,365 M1160,352 V370 M220,600 L270,597 L340,620 L330,645 M340,620 L370,625 L385,560 L405,575 L480,560 M240,680 L320,665 V650 M370,690 L390,700 L385,750 M105,610 V690 M0,485 H195 M0,530 H200 M0,570 H205 M110,700 V735 M175,700 V730 M10,550 V635 M890,592 L790,685 L830,680 L900,677 L880,795 L812,792 L832,740 L760,725 L770,670 L755,640 L765,590 M640,655 L680,665 L770,662 M680,770 L720,697 L760,705 M847,800 L845,900 M745,850 L835,895 M720,580 L725,550 L770,530 M1230,660 L1255,590 L1320,608 M1270,772 L1390,768 L1420,750 V735 L1445,725 L1450,670 H1536 M1450,722 L1536,728 M1140,815 L1150,768 L1260,790 M1170,885 L1180,870 L1220,880 M1170,885 L1230,900 L1365,895 M835,912 L885,905 M580,780 L570,820 L495,805 M130,800 L125,840 L225,855 L190,930 M130,800 L160,800 L185,820 L170,825 L130,820 M225,850 L270,860 M120,885 L180,895 V925 M100,790 L80,850 M0,800 L130,795 M20,740 L10,830 M180,950 L150,1005 M290,960 L270,1020 L255,1080 M0,980 H45 M0,1025 L50,1028 M415,1015 L570,1025 L540,1035 L520,1110 M620,970 L600,1045 L650,1040 L655,985 L625,980 M620,1045 L600,1080 V1105 L625,1108 L620,1050 M690,980 L685,1020 L700,1050 L730,1052 L738,980 M380,1118 L620,1108 M80,1080 L100,1120 L95,1160 L80,1190 M110,1170 L100,1210 M195,1230 L180,1260 M100,1210 L210,1280 M280,1270 L380,1310 M280,1270 L275,1325 L235,1310 M1458,1190 L1500,1195 L1536,1215 M1420,1400 L1455,1388 L1465,1420 L1425,1428Z M1465,1400 L1490,1370 L1536,1368 M1410,1440 L1500,1420 L1536,1400 M1410,1440 V1465 L1350,1485 L1365,1520 M1410,1465 L1415,1520 H1475",
    minor:
      "M165,345 L205,490 L215,640 L240,740 L285,805 L280,935 M260,345 L330,440 L430,530 L490,580 L555,670 L780,935 V970 M400,485 L545,435 L555,400 L600,372 L630,365 L640,345 M220,630 L280,648 L370,650 L555,667 L640,665 V635 L720,582 H770 L830,572 L970,605 L1230,660 L1255,720 L1270,800 L1240,850 L1210,940 V975 L1170,1030 L1175,1070 M370,650 L350,740 M240,735 L640,780 M320,745 L285,805 M0,740 L240,735 M0,700 L230,692 M80,610 L215,605 M70,505 L200,500 M0,505 H30 M0,410 H30 M80,765 L175,760 L180,740 M795,345 L785,410 L765,415 L755,450 L780,480 L785,515 L772,530 V580 M1040,352 L1150,370 L1190,395 L1165,550 L1130,635 M830,985 V925 H890 L900,885 L935,865 V840 L1050,825 L1110,830 L1140,820 L1200,840 L1245,842 M530,770 L520,830 L475,900 L465,950 M520,830 L540,840 L515,910 L520,950 M425,965 L375,1130 L320,1165 L280,1200 L275,1220 L285,1240 L275,1270 M60,1070 L85,1080 L95,1090 L135,1100 L150,1160 L200,1230 L275,1270 M0,1150 L60,1165 H150 M10,1150 L100,1210 M80,1165 L75,1190 M285,1240 L440,1235 L480,1242 L600,1238 L650,1255 V1280 L670,1310 H715 L735,1275 L915,1262 M915,1230 H975 V1280 L915,1285Z M980,1225 L1040,1210 L1170,1220 L1440,1200 L1458,1180 V1110 L1450,1100 L1458,1060 M980,1265 L1100,1300 L1190,1320 M1200,1220 V1245 L1215,1260 L1190,1320 L1105,1460 L1080,1520 V1545 M1540,830 L1525,850 L1485,860 L1520,1030 M0,845 L40,860 H115 V915",
    medium:
      "M30,380 L35,480 L60,840 V920 L50,1070 L-4,1150 M-4,1185 L35,1230 L-4,1295 M0,915 H110 L420,960 L560,962 L640,958 L820,985 L950,992 L1050,1025 L1175,1072 L1250,1070 L1540,1040",
    dark: "M1540,1495 L1480,1545",
  },
];

function Layer({
  name,
  fill = "none",
  stroke = "none",
  width = 0,
}: {
  name: Exclude<keyof Tile, "transform">;
  fill?: string;
  stroke?: string;
  width?: number;
}) {
  return (
    <g fill={fill} stroke={stroke} strokeWidth={width} strokeLinejoin="round">
      {tiles.map((t) => (
        <path key={t.transform} transform={t.transform} d={t[name]} vectorEffect="non-scaling-stroke" />
      ))}
    </g>
  );
}

const roadLabels = [
  { id: "univ", d: "M240,307 C250,284 262,266 276,238", text: "UNIVERSITY" },
  { id: "univ2", d: "M286,194 L286,120", text: "ROAD" },
  { id: "fifth", d: "M720,486 C732,455 750,431 786,431 H880", text: "5TH MAIN ROAD" },
  { id: "kr", d: "M897,514 C897,420 895,440 926,352", text: "KR MAIN ROAD" },
  { id: "murphy", d: "M1350,265 C1350,215 1362,180 1440,180", text: "MURPHY ROAD" },
  { id: "old", d: "M1482,176 L1536,162 L1600,142", text: "OLD MADRAS" },
  { id: "feet", d: "M1543,202 L1553,365", text: "100 FEET ROAD" },
  { id: "hosur", d: "M1215,541 C1222,580 1245,610 1275,668", text: "HOSUR ROAD" },
  { id: "main", d: "M104,650 C108,610 122,560 152,510", text: "T MAIN ROAD" },
];

function CityMap() {
  return (
    <svg
      role="img"
      aria-label="Map of Bengaluru with the route"
      viewBox="0 149 2048 499"
      preserveAspectRatio="xMidYMid slice"
      className="block h-[499px] w-full"
    >
      <defs>
        <radialGradient id="pinBlue" cx="50%" cy="30%" r="60%">
          <stop offset="0" stopColor="#4a4aff" />
          <stop offset="1" stopColor="#0000e0" />
        </radialGradient>
        <linearGradient id="pinRed" x1="0" y1="0" x2="0" y2="1">
          <stop offset="0" stopColor="#ff4650" />
          <stop offset="0.45" stopColor="#f56a6e" />
          <stop offset="1" stopColor="#d80f18" />
        </linearGradient>
        {roadLabels.map((l) => (
          <path key={l.id} id={l.id} d={l.d} />
        ))}
      </defs>
      <rect x="0" y="148" width="2048" height="500" fill="#f8f5ee" />
      <Layer name="green" fill="#d4eea0" />
      <Layer name="pale" fill="#dfe2c0" />
      <Layer name="forest" fill="#aee08d" />
      <Layer name="tiny" stroke="#dadadf" width={1.3} />
      <Layer name="lake" fill="#8ed9f5" />
      <Layer name="stream" stroke="#8ed9f5" width={2.4} />
      <Layer name="minor" stroke="#c3cdce" width={5.4} />
      <Layer name="minor" stroke="#d9e2e3" width={4} />
      <Layer name="medium" stroke="#a9a9b2" width={8} />
      <Layer name="medium" stroke="#d1d1d9" width={6.2} />
      <Layer name="dark" stroke="#8f8f98" width={10.5} />
      <Layer name="dark" stroke="#aeaeb6" width={8.8} />
      <ellipse cx="1555" cy="385" rx="19" ry="8" fill="#d1d1d9" />
      <path
        d="M931,365 L933,383 L931,432 Q942,442 955,445 L977,418 L1004,358 L1023,338 L1027,317 H1037 L1047,313 L1092,275 L1066,257"
        fill="none"
        stroke="#ff69b4"
        strokeWidth="7"
        strokeLinejoin="round"
      />
      <g
        fontFamily="Inter, sans-serif"
        fontSize="18"
        fontWeight="500"
        fill="#3a3a3c"
        stroke="#f8f5ee"
        strokeWidth="3"
        paintOrder="stroke"
      >
        {roadLabels.map((l) => (
          <text key={l.id}>
            <textPath href={"#" + l.id}>{l.text}</textPath>
          </text>
        ))}
        <text x="2034" y="158" transform="rotate(50 2034 158)">
          AD
        </text>
        <text x="1777" y="643" textAnchor="middle" fontStyle="italic" fontWeight="600" fill="#3f73b5" stroke="#a9e2f7">
          Bellandur
        </text>
      </g>
      <circle cx="1062" cy="243" r="22" fill="#ffffff" stroke="#00000022" />
      <circle cx="1062" cy="243" r="16" fill="#007aff" />
      <path
        d="M1062,242 L1056,233 C1042,228 1034,218 1034,205 A28,28 0 0 1 1090,205 C1090,218 1082,228 1068,233Z"
        fill="url(#pinRed)"
      />
      <circle cx="1062" cy="195" r="8" fill="#ffffff" />
      <path d="M1060,205 h4 v18 h-4z" fill="#ffffff" />
      <path
        d="M930,367 L924,358 C910,353 902,343 902,329 A28,28 0 0 1 958,329 C958,343 950,353 936,358Z"
        fill="url(#pinBlue)"
      />
      <circle cx="930" cy="319" r="8" fill="#ffffff" />
      <path d="M927,328 h6 l-1,18 h-4z" fill="#ffffff" />
    </svg>
  );
}

function StatusBar() {
  return (
    <div className="grid h-12 grid-cols-3 items-center px-8 text-2xl font-medium text-black">
      <div className="flex gap-5">
        <span>12:41 PM</span>
        <span>Wed Jul 16</span>
      </div>
      <div className="flex justify-center gap-1.5">
        <i className="size-2.5 rounded-full bg-[#a6a6a6]" />
        <i className="size-2.5 rounded-full bg-[#a6a6a6]" />
        <i className="size-2.5 rounded-full bg-[#a6a6a6]" />
      </div>
      <div className="-mr-1 flex items-center justify-end gap-2">
        <svg viewBox="0 0 28 20" className="h-5 w-7" fill="none" stroke="black" strokeWidth="3.4">
          <path d="M1.500,7.200 Q14,-3.500 26.500,7.200" />
          <path d="M5.800,11.800 Q14,4.800 22.200,11.800" />
          <path d="M14,20 L9.400,15.300 Q14,11.500 18.600,15.300Z" fill="black" stroke="none" />
        </svg>
        <span>100%</span>
        <svg viewBox="0 0 54 24" className="h-6 w-[54px]">
          <rect x="1" y="1" width="46" height="22" rx="7" fill="none" stroke="#a3a3a3" strokeWidth="2" />
          <rect x="4" y="4" width="40" height="16" rx="4" fill="black" />
          <path d="M50,8 Q53,9.500 53,12 Q53,14.500 50,16Z" fill="#a3a3a3" />
        </svg>
      </div>
    </div>
  );
}

const hours = [4, 6, 8, 10, 12];

const charges = [
  { label: "Total Billing", value: "₹1000" },
  { label: "Extra Charges", value: "₹0" },
];

export default function App() {
  const [selected, setSelected] = useState(10);

  return (
    <div className="relative flex min-h-screen flex-col bg-[#f8f8f8] font-[Inter,'Liberation_Sans',sans-serif] text-black">
      <header className="border-b border-[#a8a8a8] bg-white">
        <StatusBar />
        <nav className="grid h-[100px] grid-cols-3 items-center px-6">
          <a href="#home" className="flex items-center gap-4 text-[33px] text-[#007aff]">
            <svg viewBox="0 0 26 40" className="h-10 w-[26px]" fill="none" stroke="currentColor" strokeWidth="5" strokeLinecap="round" strokeLinejoin="round">
              <path d="M22,3.500 L5.500,20 L22,36.500" />
            </svg>
            Home
          </a>
          <h1 className="text-center text-[33px] font-semibold text-[#1c1c1e]">selectScreen</h1>
        </nav>
      </header>

      <section className="relative">
        <CityMap />
        <div className="absolute top-[39px] left-5 rounded-2xl bg-white px-[21px] py-[17px] text-[27px] leading-10">
          Distance: 4.0 km
        </div>
        <div className="absolute bottom-3.5 left-[18px] flex items-end gap-[18px] text-[#626262]">
          <span className="flex items-center text-[30px] leading-9 font-medium">
            <FaApple className="size-6" />
            Maps
          </span>
          <a href="#legal" className="text-[19px] leading-8 font-semibold underline underline-offset-4">
            Legal
          </a>
        </div>
      </section>

      <main className="flex flex-col px-[30px] pt-[30px]">
        <div className="flex h-[108px] items-center gap-7 rounded-[20px] bg-white px-[38px]">
          <svg viewBox="0 0 32 32" className="size-8" fill="none" stroke="#008000" strokeWidth="4">
            <path d="M16,32 V3 M1.500,17.500 L16,3 L30.500,17.500" />
          </svg>
          <span className="text-[32px] font-bold">XHGR+4C Bengaluru, Karnataka, India</span>
        </div>

        <h2 className="mt-10 text-[32px] leading-10 font-bold">Estimated Usage</h2>
        <div className="mt-[19px] flex justify-between">
          {hours.map((h) => (
            <button
              key={h}
              type="button"
              aria-pressed={h === selected}
              onClick={() => setSelected(h)}
              className={
                h === selected
                  ? "h-[83px] rounded-[10px] border-2 border-black bg-[#e6f2e6] px-5 text-[32px] font-bold shadow-[5px_6px_5px_rgba(0,0,0,0.5)]"
                  : "h-[83px] rounded-[10px] border-2 border-black bg-white px-5 text-[32px] font-bold"
              }
            >
              {h} Hr
            </button>
          ))}
        </div>
        <p className="mt-[18px] text-[27px] leading-10 text-[#a52a2a]">**Note: ₹100 per extra hour.</p>
        <button
          type="button"
          className="mt-4 h-[67px] self-center rounded-3xl bg-[#4caf50] px-14 text-[31px] font-semibold text-white"
        >
          Schedule Pickup
        </button>

        <h2 className="mt-5 text-[32px] leading-10 font-bold">Choose Driver Type</h2>
        <dl className="mt-[18px] flex flex-col gap-2.5">
          {charges.map((c) => (
            <div key={c.label} className="flex h-[99px] items-center justify-between rounded-[20px] bg-white px-[30px] pt-0.5">
              <dt className="text-[31px]">{c.label}</dt>
              <dd className="text-[32px] font-bold">{c.value}</dd>
            </div>
          ))}
        </dl>
      </main>

      <div className="absolute inset-0 flex flex-col justify-end bg-black/40">
        <section
          role="dialog"
          aria-labelledby="sheet-title"
          className="relative flex flex-col items-center rounded-t-[50px] bg-white px-[50px] pt-[89px] pb-[15px]"
        >
          <button type="button" aria-label="Close" className="absolute top-10 right-[50px] flex size-12 items-center justify-center">
            <svg viewBox="0 0 30 30" className="size-[30px]" fill="none" stroke="#333333" strokeWidth="3.500" strokeLinecap="round">
              <path d="M2,2 L28,28 M28,2 L2,28" />
            </svg>
          </button>
          <h2 id="sheet-title" className="text-[38px] leading-[48px] font-bold text-[#222222]">
            When do you need the driver?
          </h2>
          <button
            type="button"
            className="mt-[31px] h-[78px] rounded-full border-2 border-[#4caf50] bg-[#e0f5e8] px-10 text-[28px] font-bold text-[#2e7d32]"
          >
            Schedule
          </button>
          <p className="mt-[41px] text-center text-[31px] leading-[38px] text-[#444444]">
            Pickup Time:
            <br />
            7/16/2025, 12:40:57 PM
          </p>
          <button type="button" className="mt-10 h-[87px] w-full rounded-[20px] bg-[#dbd83b] text-[31px] font-medium text-white">
            Pick Date &amp; Time
          </button>
          <button type="button" className="mt-[50px] h-[73px] w-full rounded-3xl bg-[#00aa55] text-[32px] font-semibold text-white">
            Confirm Pickup
          </button>
          <div className="mt-[54px] h-[11px] w-[630px] rounded-full bg-linear-to-b from-[#4c4c4c] to-[#8c8c8c]" />
        </section>
      </div>
    </div>
  );
}
